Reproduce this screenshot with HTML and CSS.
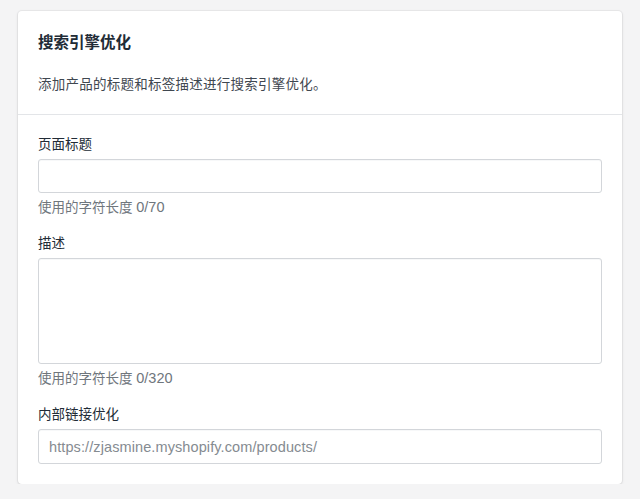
FILE: index.html
```html
<!DOCTYPE html>
<html lang="zh-CN">
<head>
<meta charset="utf-8">
<title>搜索引擎优化</title>
<link rel="stylesheet" href="styles.css">
</head>
<body>
<div class="card">
  <div class="card-header">
    <h2 class="card-title">搜索引擎优化</h2>
    <p class="card-desc">添加产品的标题和标签描述进行搜索引擎优化。</p>
  </div>
  <div class="card-body">
    <label class="label">页面标题</label>
    <div class="input"></div>
    <div class="help">使用的字符长度 <span class="num">0/70</span></div>
    <label class="label label-gap">描述</label>
    <div class="input textarea"></div>
    <div class="help">使用的字符长度 <span class="num">0/320</span></div>
    <label class="label label-gap">内部链接优化</label>
    <div class="input url"><span class="placeholder">https://zjasmine.myshopify.com/products/</span></div>
  </div>
</div>
</body>
</html>
```
FILE: styles.css
```css
html, body {
  margin: 0;
  padding: 0;
  background: #f4f4f5;
  font-family: "Liberation Sans", "Noto Sans CJK SC", sans-serif;
}
body {
  padding: 11px 18px 0 18px;
  width: 604px;
}
.card {
  background: #fff;
  border-radius: 4px;
  box-shadow: 0 0 0 1px rgba(63,63,68,0.05), 0 1px 3px 0 rgba(63,63,68,0.15);
}
.card-header {
  padding: 22px 20px 19px 20px;
  border-bottom: 1px solid #e3e5e8;
}
.card-title {
  margin: 0;
  font-size: 15.5px;
  line-height: 20px;
  font-weight: 700;
  color: #212b36;
}
.card-desc {
  margin: 22px 0 0 0;
  font-size: 13.5px;
  line-height: 20px;
  letter-spacing: 0.25px;
  color: #3f4750;
}
.card-body {
  padding: 20px 20px 20px 20px;
  display: flex;
  flex-direction: column;
}
.label {
  display: block;
  font-size: 13.5px;
  line-height: 20px;
  color: #212b36;
  margin-bottom: 4px;
}
.label-gap {
  margin-top: 16px;
}
.input {
  box-sizing: border-box;
  height: 34px;
  border: 1px solid #d3d6da;
  border-radius: 3px;
  background: #fff;
  box-shadow: inset 0 1px 0 0 rgba(99,115,129,0.05);
}
.textarea {
  height: 106px;
}
.url {
  height: 35px;
  display: flex;
  align-items: center;
  padding-left: 10px;
}
.placeholder {
  font-size: 14.5px;
  letter-spacing: 0.1px;
  color: #858b91;
}
.help {
  margin-top: 5px;
  height: 20px;
  font-size: 13.5px;
  line-height: 20px;
  color: #6f767d;
}
.num {
  font-size: 14.5px;
  line-height: 14px;
}
```
